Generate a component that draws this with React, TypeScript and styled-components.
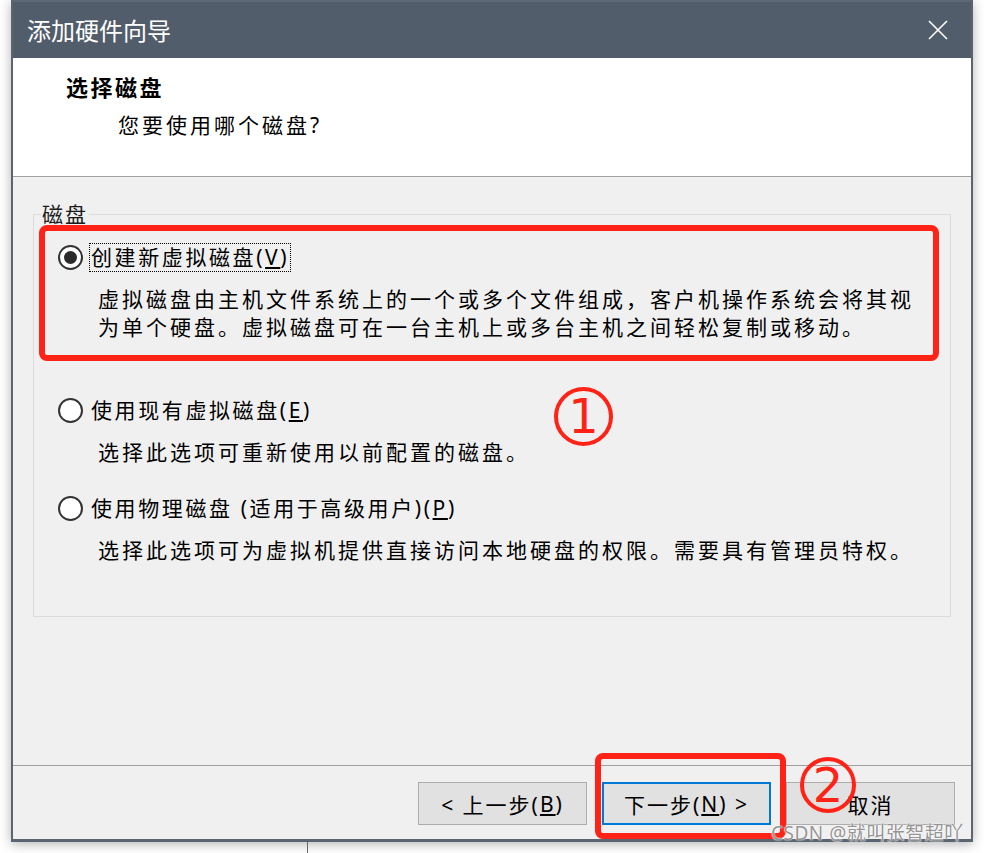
import React from "react";
import styled, { createGlobalStyle } from "styled-components";

const GlobalStyle = createGlobalStyle`
  html, body { margin: 0; padding: 0; background: #ffffff; }
  body { font-family: "Noto Sans", "Noto Sans CJK SC", sans-serif; color: #000; }
  * { box-sizing: border-box; }
`;

const Page = styled.div`
  position: relative;
  width: 984px;
  height: 853px;
  overflow: hidden;
  background: #ffffff;
  padding-left: 11px;
`;

const Window = styled.div`
  width: 962px;
  height: 842px;
  display: flex;
  flex-direction: column;
  border: 2px solid #5b6571;
  border-top: 0;
  border-bottom-width: 3px;
  box-shadow: 0 2px 11px rgba(0, 0, 0, 0.3);
  background: #f0f0f0;
`;

const TitleBar = styled.div`
  flex: none;
  height: 58px;
  display: flex;
  align-items: center;
  justify-content: space-between;
  padding: 0 23px 0 14px;
  background: #525d6b;
  border-top: 2px solid #5e6874;
  color: #ffffff;
  font-family: "Noto Sans CJK SC", sans-serif;
  font-size: 24px;
  line-height: 30px;
`;

const CloseIcon = styled.svg`
  width: 20px;
  height: 20px;
  display: block;
`;

const Header = styled.div`
  flex: none;
  height: 119px;
  background: #ffffff;
  border-bottom: 1px solid #a0a0a0;
  padding: 15px 0 0 53px;
`;

const Heading = styled.div`
  font-size: 22px;
  font-weight: 700;
  line-height: 28px;
  letter-spacing: 2.5px;
`;

const Subheading = styled.div`
  margin: 10px 0 0 52px;
  font-size: 21px;
  line-height: 28px;
  letter-spacing: 3px;
`;

const Body = styled.div`
  flex: 1;
  padding: 23px 20px 0 20px;
`;

const GroupBox = styled.fieldset`
  margin: 0;
  min-width: 0;
  padding: 15px 0 52px 0;
  border: 1px solid #dcdcdc;
`;

const GroupLegend = styled.legend`
  margin-left: 7px;
  padding: 0 1px;
  font-size: 21px;
  line-height: 28px;
  letter-spacing: 2px;
  color: #1a1a1a;
`;

const Option = styled.div<{ $gap: number }>`
  margin: ${(p) => p.$gap}px 0 0 24px;
`;

const OptionRow = styled.div`
  display: flex;
  align-items: center;
  gap: 6px;
`;

const Radio = styled.span<{ $checked?: boolean }>`
  flex: none;
  width: 25px;
  height: 25px;
  border-radius: 50%;
  border: 2.5px solid #333333;
  background: #ffffff;
  display: flex;
  align-items: center;
  justify-content: center;
  &::after {
    content: "";
    width: 13px;
    height: 13px;
    border-radius: 50%;
    background: ${(p) => (p.$checked ? "#2b2b2b" : "transparent")};
  }
`;

const OptionLabel = styled.span<{ $focused?: boolean }>`
  padding: 0 1px;
  border: 1px dotted ${(p) => (p.$focused ? "#000" : "transparent")};
  font-size: 21px;
  line-height: 27px;
  letter-spacing: 2.6px;
`;

const Description = styled.div`
  margin: 13px 0 0 40px;
  font-size: 21px;
  line-height: 28px;
  letter-spacing: 3px;
  white-space: nowrap;
`;

const Footer = styled.div`
  flex: none;
  height: 74px;
  border-top: 1px solid #a0a0a0;
  display: flex;
  justify-content: flex-end;
  align-items: flex-start;
  gap: 15px;
  padding: 16px 16px 0 0;
`;

const Button = styled.button<{ $default?: boolean }>`
  width: 169px;
  height: 43px;
  margin: 0;
  padding: 0;
  background: #e1e1e1;
  border: ${(p) => (p.$default ? "2px solid #0078d7" : "1px solid #adadad")};
  font-family: "Noto Sans", "Noto Sans CJK SC", sans-serif;
  font-size: 21px;
  letter-spacing: 2px;
  color: #000;
  display: flex;
  align-items: center;
  justify-content: center;
`;

const BackdropTick = styled.div`
  margin-left: 296px;
  width: 1px;
  height: 11px;
  background: #666666;
`;

const Callout = styled.div<{ $x: number; $y: number; $w: number; $h: number }>`
  position: absolute;
  left: ${(p) => p.$x}px;
  top: ${(p) => p.$y}px;
  width: ${(p) => p.$w}px;
  height: ${(p) => p.$h}px;
  border: 6px solid #ff2216;
  border-radius: 8px;
  pointer-events: none;
`;

const StepBadge = styled.div<{ $x: number; $y: number; $size: number }>`
  position: absolute;
  left: ${(p) => p.$x}px;
  top: ${(p) => p.$y}px;
  width: ${(p) => p.$size}px;
  height: ${(p) => p.$size}px;
  border: 4px solid #ff2216;
  border-radius: 50%;
  display: flex;
  align-items: center;
  justify-content: center;
  color: #ff2216;
  font-family: "DejaVu Sans", sans-serif;
  font-size: 48px;
  line-height: 1;
  padding-bottom: 1px;
`;

const Watermark = styled.div`
  position: absolute;
  left: 771px;
  top: 820px;
  font-family: "Noto Sans", "Noto Sans CJK SC", sans-serif;
  font-size: 19px;
  line-height: 26px;
  letter-spacing: 0.5px;
  color: rgba(120, 120, 120, 0.8);
  text-shadow: 0 0 2px #ffffff, 0 0 1px #ffffff;
  white-space: nowrap;
`;

export default function App() {
  return (
    <>
      <GlobalStyle />
      <Page>
        <Window>
          <TitleBar>
            <span>添加硬件向导</span>
            <CloseIcon viewBox="0 0 20 20">
              <path d="M1 1 L19 19 M19 1 L1 19" stroke="#ffffff" strokeWidth="1.6" fill="none" />
            </CloseIcon>
          </TitleBar>
          <Header>
            <Heading>选择磁盘</Heading>
            <Subheading>您要使用哪个磁盘?</Subheading>
          </Header>
          <Body>
            <GroupBox>
              <GroupLegend>磁盘</GroupLegend>
              <Option $gap={0}>
                <OptionRow>
                  <Radio $checked />
                  <OptionLabel $focused>
                    创建新虚拟磁盘(<u>V</u>)
                  </OptionLabel>
                </OptionRow>
                <Description>
                  虚拟磁盘由主机文件系统上的一个或多个文件组成，客户机操作系统会将其视
                  <br />
                  为单个硬盘。虚拟磁盘可在一台主机上或多台主机之间轻松复制或移动。
                </Description>
              </Option>
              <Option $gap={55}>
                <OptionRow>
                  <Radio />
                  <OptionLabel>
                    使用现有虚拟磁盘(<u>E</u>)
                  </OptionLabel>
                </OptionRow>
                <Description>选择此选项可重新使用以前配置的磁盘。</Description>
              </Option>
              <Option $gap={28}>
                <OptionRow>
                  <Radio />
                  <OptionLabel>
                    使用物理磁盘 (适用于高级用户)(<u>P</u>)
                  </OptionLabel>
                </OptionRow>
                <Description>选择此选项可为虚拟机提供直接访问本地硬盘的权限。需要具有管理员特权。</Description>
              </Option>
            </GroupBox>
          </Body>
          <Footer>
            <Button>
              &lt; 上一步(<u>B</u>)
            </Button>
            <Button $default>
              下一步(<u>N</u>) &gt;
            </Button>
            <Button>取消</Button>
          </Footer>
        </Window>
        <BackdropTick />
        <Callout $x={39} $y={225} $w={900} $h={136} />
        <Callout $x={595} $y={753} $w={191} $h={86} />
        <StepBadge $x={554} $y={387} $size={59}>1</StepBadge>
        <StepBadge $x={800} $y={757} $size={56}>2</StepBadge>
        <Watermark>CSDN @就叫张智超吖</Watermark>
      </Page>
    </>
  );
}
